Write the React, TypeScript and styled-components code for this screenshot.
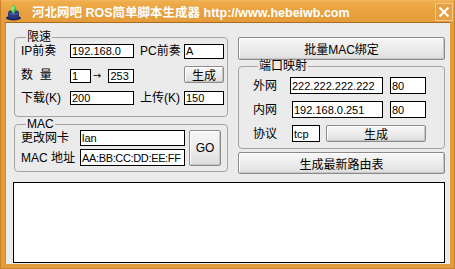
import React from "react";
import styled, { createGlobalStyle } from "styled-components";

const GlobalStyle = createGlobalStyle`
  html, body {
    margin: 0;
    padding: 0;
    background: #ffffff;
  }
  * {
    box-sizing: border-box;
  }
`;

const FONT = `"Liberation Sans", "Noto Sans CJK SC", sans-serif`;

// Window chrome

const Window = styled.div`
  width: 455px;
  height: 269px;
  display: flex;
  flex-direction: column;
  background: #e39d3d;
  padding: 0 4px 4px 4px;
  border: 1px solid #c8822a;
  border-top-color: #f0b55c;
  font-family: ${FONT};
  overflow: hidden;
`;

const TitleBar = styled.div`
  height: 21px;
  display: flex;
  align-items: center;
  margin: 0 -4px;
  padding: 0 1px 0 4px;
  background: linear-gradient(180deg, #f0ae4c 0%, #e8a23f 45%, #e59c3a 100%);
`;

const TitleText = styled.span`
  flex: 1;
  margin-left: 10px;
  color: #ffffff;
  font-weight: bold;
  font-size: 12.5px;
  white-space: nowrap;
`;

const CloseButton = styled.div`
  width: 18px;
  height: 18px;
  display: flex;
  align-items: center;
  justify-content: center;
  border: 1px solid #f4c98a;
  background: #e6a044;
`;

const Client = styled.div`
  flex: 1;
  background: #ebebeb;
  border-top: 1px solid #a66a20;
  border-left: 1px solid #c8892f;
  padding: 8px 5px 1px 8px;
  display: flex;
  flex-direction: column;
`;

const Columns = styled.div`
  display: flex;
  gap: 10px;
  align-items: flex-start;
`;

const Column = styled.div<{ $width: number; $top?: number }>`
  width: ${(p) => p.$width}px;
  margin-top: ${(p) => p.$top ?? 0}px;
  display: flex;
  flex-direction: column;
`;

// Group boxes

const Group = styled.fieldset<{ $pad: string; $gapTop?: number }>`
  margin: ${(p) => p.$gapTop ?? 0}px 0 0 0;
  padding: ${(p) => p.$pad};
  border: 1px solid #a5a5a5;
  border-radius: 4px;
  min-inline-size: 0;
`;

const Caption = styled.legend`
  margin-left: 5px;
  padding: 0 1px;
  font-size: 12px;
  line-height: 12px;
  color: #000000;
  background: #ebebeb;
`;

const Grid = styled.div<{ $cols: string; $rows: string; $rowGap: number }>`
  display: grid;
  grid-template-columns: ${(p) => p.$cols};
  grid-template-rows: ${(p) => p.$rows};
  row-gap: ${(p) => p.$rowGap}px;
  align-items: center;
`;

const Label = styled.span<{ $indent?: number }>`
  font-size: 12px;
  line-height: 14px;
  color: #000000;
  padding-left: ${(p) => p.$indent ?? 0}px;
  white-space: pre;
`;

const Field = styled.div<{ $w: number; $h: number; $ml?: number; $tight?: boolean }>`
  width: ${(p) => p.$w}px;
  height: ${(p) => p.$h}px;
  margin-left: ${(p) => p.$ml ?? 0}px;
  background: #ffffff;
  border: 1px solid #000000;
  padding: 0 1px;
  display: flex;
  align-items: center;
  font-size: 11px;
  letter-spacing: ${(p) => (p.$tight ? "-0.35px" : "0")};
  color: #000000;
  white-space: nowrap;
  overflow: hidden;
`;

const Button = styled.div<{ $w?: number; $h: number }>`
  width: ${(p) => (p.$w ? `${p.$w}px` : "100%")};
  height: ${(p) => p.$h}px;
  display: flex;
  align-items: center;
  justify-content: center;
  background: linear-gradient(180deg, #f7f7f7 0%, #ececec 50%, #dedede 100%);
  border: 1px solid #8c8c8c;
  border-radius: 2px;
  box-shadow: inset 1px 1px 0 #ffffff, inset -1px -1px 0 #c6c6c6;
  font-size: 12px;
  color: #000000;
  white-space: nowrap;
`;

const Inline = styled.div<{ $gap: number; $align?: string }>`
  display: flex;
  align-items: ${(p) => p.$align ?? "center"};
  gap: ${(p) => p.$gap}px;
  height: 100%;
`;

const Arrow = styled.span`
  font-family: "DejaVu Sans", sans-serif;
  font-size: 10px;
  line-height: 14px;
  width: 14px;
  margin: 0 2px 0 2px;
`;

const Output = styled.div`
  margin: 8px 0 0 -1px;
  height: 81px;
  background: #ffffff;
  border: 1px solid #000000;
`;

const GoCell = styled.div`
  grid-column: 3;
  grid-row: 1 / span 2;
  align-self: stretch;
  display: flex;
  align-items: center;
`;

const WideCell = styled.div`
  grid-column: 2 / span 2;
  height: 17px;
`;

const Spacer = styled.div<{ $h: number }>`
  height: ${(p) => p.$h}px;
`;

function AppIcon() {
  return (
    <svg width="17" height="18" viewBox="0 0 17 18">
      <ellipse cx="8.5" cy="15" rx="7.5" ry="2.6" fill="#1f2a5c" />
      <path d="M3 10 Q3 7 8.5 7 Q14 7 14 10 L14 14 Q8.5 16.5 3 14 Z" fill="#2c3c7a" />
      <path d="M4.5 10.5 Q8.5 12 12.5 10.5" stroke="#5a6cb0" strokeWidth="1" fill="none" />
      <path d="M8.5 1 L11.5 6 L8.5 11 L5.5 6 Z" fill="#3fbf3a" />
      <path d="M8.5 1 L8.5 11 L5.5 6 Z" fill="#8ae27a" />
      <path d="M8.5 2.5 L9.5 5.5 L8.5 6.5 Z" fill="#d8ffd0" />
    </svg>
  );
}

function CloseIcon() {
  return (
    <svg width="12" height="12" viewBox="0 0 12 12">
      <path d="M1.5 1.5 L10.5 10.5 M10.5 1.5 L1.5 10.5" stroke="#ffffff" strokeWidth="2" />
    </svg>
  );
}

export default function App() {
  return (
    <>
      <GlobalStyle />
      <Window>
        <TitleBar>
          <AppIcon />
          <TitleText>河北网吧 ROS简单脚本生成器 http://www.hebeiwb.com</TitleText>
          <CloseButton>
            <CloseIcon />
          </CloseButton>
        </TitleBar>

        <Client>
          <Columns>
            <Column $width={215}>
              <Group $pad="1px 0 11px 6px">
                <Caption>限速</Caption>
                <Grid $cols="49px 64px 50px 40px" $rows="14px 17px 14px" $rowGap={8}>
                  <Label>IP前奏</Label>
                  <Field $w={64} $h={14}>192.168.0</Field>
                  <Label $indent={6}>PC前奏</Label>
                  <Field $w={40} $h={15}>A</Field>

                  <Label>数  量</Label>
                  <Inline $gap={0} $align="flex-end">
                    <Field $w={21} $h={14}>1</Field>
                    <Arrow>→</Arrow>
                    <Field $w={26} $h={14}>253</Field>
                  </Inline>
                  <span />
                  <Button $w={40} $h={17}>生成</Button>

                  <Label>下载(K)</Label>
                  <Field $w={64} $h={14}>200</Field>
                  <Label $indent={6}>上传(K)</Label>
                  <Field $w={40} $h={14}>150</Field>
                </Grid>
              </Group>

              <Group $pad="0 0 5px 6px" $gapTop={1}>
                <Caption>MAC</Caption>
                <Grid $cols="59px 109px 32px" $rows="16px 17px" $rowGap={3}>
                  <Label>更改网卡</Label>
                  <Field $w={105} $h={16}>lan</Field>
                  <GoCell>
                    <Button $w={32} $h={36}>GO</Button>
                  </GoCell>
                  <Label>MAC 地址</Label>
                  <Field $w={105} $h={17} $tight>AA:BB:CC:DD:EE:FF</Field>
                </Grid>
              </Group>
            </Column>

            <Column $width={208} $top={6}>
              <Button $h={23}>批量MAC绑定</Button>

              <Group $pad="5px 0 6px 14px">
                <Caption>端口映射</Caption>
                <Grid $cols="37px 100px 36px" $rows="17px 17px 17px" $rowGap={7}>
                  <Label>外网</Label>
                  <Field $w={93} $h={17}>222.222.222.222</Field>
                  <Field $w={36} $h={17}>80</Field>

                  <Label>内网</Label>
                  <Field $w={91} $h={17} $ml={2}>192.168.0.251</Field>
                  <Field $w={36} $h={17}>80</Field>

                  <Label>协议</Label>
                  <WideCell>
                    <Inline $gap={6}>
                      <Field $w={28} $h={17} $ml={2}>tcp</Field>
                      <Button $w={100} $h={17}>生成</Button>
                    </Inline>
                  </WideCell>
                </Grid>
              </Group>

              <Spacer $h={3} />
              <Button $h={22}>生成最新路由表</Button>
            </Column>
          </Columns>

          <Output />
        </Client>
      </Window>
    </>
  );
}
